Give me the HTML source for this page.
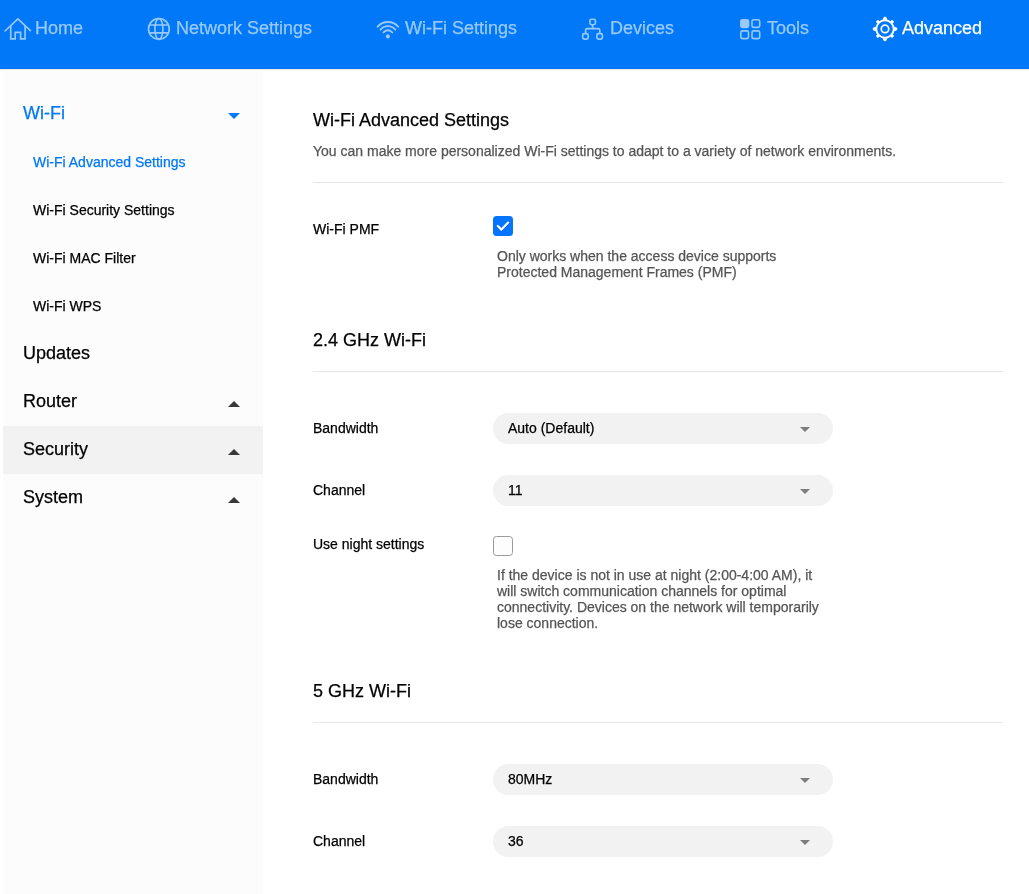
<!DOCTYPE html>
<html lang="en">
<head>
<meta charset="utf-8">
<title>Wi-Fi Advanced Settings</title>
<style>
*{box-sizing:border-box;margin:0;padding:0}
html,body{width:1029px;height:894px;overflow:hidden;background:#fff}
body{font-family:"Liberation Sans",Arial,Helvetica,sans-serif;color:#000;position:relative;-webkit-font-smoothing:antialiased;-webkit-text-stroke:0.25px}
#wrap{position:absolute;left:0;top:0;width:1029px;height:894px;will-change:transform}
/* nav */
#nav{position:absolute;left:0;top:0;width:1029px;height:69px;background:#0078f8;box-shadow:0 1px 1px rgba(120,90,40,.14);z-index:2}
#nav .it{position:absolute;top:0;height:56px;font-size:18px;line-height:56px;color:#99c9fc;white-space:nowrap}
#nav .it.on{color:#fff}
#nav svg{position:absolute;fill:none;stroke:currentColor;overflow:visible}
/* sidebar */
#side{position:absolute;left:3px;top:71px;width:260px;height:823px;background:#fcfcfc}
#side .m{position:absolute;left:0;width:260px;height:48px;font-size:18px;line-height:48px;padding-left:20px;color:#000}
#side .m.on{color:#0078f8}
#side .s{position:absolute;left:0;width:260px;height:48px;font-size:14px;line-height:48px;padding-left:30px;color:#000}
#side .s.on{color:#0078f8}
.tri{position:absolute;right:23px;width:0;height:0;border-left:6px solid transparent;border-right:6px solid transparent}
.tri.up{border-bottom:6px solid #383838}
.tri.dn{border-top:6px solid #0078f8}
/* main */
.h{position:absolute;left:313px;font-size:18px;line-height:22px;color:#000;white-space:nowrap}
.hr{position:absolute;left:313px;width:690px;height:1px;background:#e6e6e6}
.lb{position:absolute;left:313px;font-size:14px;line-height:18px;color:#000;white-space:nowrap}
.help{position:absolute;left:497px;font-size:14px;line-height:16px;color:#555}
.sel{position:absolute;left:493px;width:340px;height:31px;border-radius:16px;background:#f2f2f2;font-size:14px;line-height:31px;padding-left:15px;color:#000}
.sel i{position:absolute;right:23px;top:14px;width:0;height:0;border-left:5px solid transparent;border-right:5px solid transparent;border-top:5px solid #7d7d7d}
.cb{position:absolute;left:493px;width:20px;height:20px;border-radius:3.5px}
.cb.off{border:1px solid #9a9a9a;background:#fdfdfd}
.cb.on{background:#0575ff}
</style>
</head>
<body>
<div id="wrap">
<div id="nav">
<svg id="ico" width="1029" height="68" viewBox="0 0 1029 68" style="left:0;top:0;color:#99c9fc">
<g stroke-width="1.65" stroke-linecap="round" stroke-linejoin="round"><path d="M5 31 L17.9 18.8 L30.4 30.7"/><path d="M10.7 26 V38.9 H15.2 V32.4 H20.6 V38.9 H25.1 V26" stroke-linecap="butt" stroke-linejoin="miter"/></g>
<g stroke-width="1.65"><circle cx="158.9" cy="28.9" r="10.4"/><ellipse cx="158.9" cy="28.9" rx="4" ry="10.4"/><path d="M149.4 25 H168.4 M149.4 32.8 H168.4"/></g>
<g stroke-width="1.9" stroke-linecap="round"><path d="M377.64 26.68 A13.6 13.6 0 0 1 398.16 26.68"/><path d="M380.52 29.62 A9.5 9.5 0 0 1 395.28 29.62"/><path d="M383.48 32.50 A5.4 5.4 0 0 1 392.32 32.50"/></g><circle cx="387.9" cy="36.4" r="2.05" fill="currentColor" stroke="none"/>
<g stroke-width="1.65"><rect x="589.9" y="19.2" width="5.5" height="5.5" rx="1.6"/><rect x="582.7" y="33.6" width="5.5" height="5.5" rx="1.6"/><rect x="596.9" y="33.6" width="5.5" height="5.5" rx="1.6"/><path d="M592.65 24.7 V28.6 M585.6 33.6 V30.2 A1.6 1.6 0 0 1 587.2 28.6 H598.2 A1.6 1.6 0 0 1 599.8 30.2 V33.6"/></g>
<g stroke-width="1.6"><rect x="740.8" y="19.7" width="7.7" height="7.7" rx="1.6" fill="currentColor"/><rect x="752" y="19.7" width="7.7" height="7.7" rx="1.6"/><rect x="740.8" y="30.9" width="7.7" height="7.7" rx="1.6"/><rect x="752" y="30.9" width="7.7" height="7.7" rx="1.6"/></g>
<g color="#fff"><circle cx="885" cy="28.95" r="8.7" stroke-width="1.85"/><circle cx="885" cy="28.95" r="3.75" stroke-width="1.7"/><g fill="#fff" stroke="#fff" stroke-width="0.7" stroke-linejoin="round"><polygon points="882.95,19.75 884.05,17.15 885.95,17.15 887.05,19.75"/><circle cx="892.11" cy="21.84" r="1.35"/><polygon points="894.20,26.90 896.80,28.00 896.80,29.90 894.20,31.00"/><circle cx="892.11" cy="36.06" r="1.35"/><polygon points="887.05,38.15 885.95,40.75 884.05,40.75 882.95,38.15"/><circle cx="877.89" cy="36.06" r="1.35"/><polygon points="875.80,31.00 873.20,29.90 873.20,28.00 875.80,26.90"/><circle cx="877.89" cy="21.84" r="1.35"/></g></g>
</svg>
  <div class="it" style="left:35px">Home</div>
  <div class="it" style="left:176px">Network Settings</div>
  <div class="it" style="left:405px">Wi-Fi Settings</div>
  <div class="it" style="left:610px">Devices</div>
  <div class="it" style="left:767px">Tools</div>
  <div class="it on" style="left:902px">Advanced</div>
</div>

<div id="side">
  <div class="m on" style="top:18px">Wi-Fi<span class="tri dn" style="top:24px"></span></div>
  <div class="s on" style="top:67px">Wi-Fi Advanced Settings</div>
  <div class="s" style="top:115px">Wi-Fi Security Settings</div>
  <div class="s" style="top:163px">Wi-Fi MAC Filter</div>
  <div class="s" style="top:211px">Wi-Fi WPS</div>
  <div class="m" style="top:258px">Updates</div>
  <div class="m" style="top:306px">Router<span class="tri up" style="top:24px"></span></div>
  <div style="position:absolute;left:0;top:355px;width:260px;height:48px;background:#f2f2f2"></div>
  <div class="m" style="top:354px">Security<span class="tri up" style="top:24px"></span></div>
  <div class="m" style="top:402px">System<span class="tri up" style="top:24px"></span></div>
</div>

<div class="h" style="top:109px">Wi-Fi Advanced Settings</div>
<div class="lb" style="top:142px;color:#555">You can make more personalized Wi-Fi settings to adapt to a variety of network environments.</div>
<div class="hr" style="top:182px"></div>

<div class="lb" style="top:220px">Wi-Fi PMF</div>
<div class="cb on" style="top:216px"><svg width="20" height="20" viewBox="0 0 20 20"><path d="M4.8 10.6 L8.4 14.2 L15.2 7.2" fill="none" stroke="#0050d8" stroke-opacity=".55" stroke-width="2.4" stroke-linecap="round" stroke-linejoin="round"/><path d="M4.8 10 L8.4 13.6 L15.2 6.6" fill="none" stroke="#fff" stroke-width="2.2" stroke-linecap="round" stroke-linejoin="round"/></svg></div>
<div class="help" style="top:248px">Only works when the access device supports<br>Protected Management Frames (PMF)</div>

<div class="h" style="top:329px">2.4 GHz Wi-Fi</div>
<div class="hr" style="top:371px"></div>

<div class="lb" style="top:419px">Bandwidth</div>
<div class="sel" style="top:413px">Auto (Default)<i></i></div>
<div class="lb" style="top:481px">Channel</div>
<div class="sel" style="top:475px">11<i></i></div>
<div class="lb" style="top:535px">Use night settings</div>
<div class="cb off" style="top:536px"></div>
<div class="help" style="top:567px">If the device is not in use at night (2:00-4:00 AM), it<br>will switch communication channels for optimal<br>connectivity. Devices on the network will temporarily<br>lose connection.</div>

<div class="h" style="top:680px">5 GHz Wi-Fi</div>
<div class="hr" style="top:722px"></div>

<div class="lb" style="top:770px">Bandwidth</div>
<div class="sel" style="top:764px">80MHz<i></i></div>
<div class="lb" style="top:832px">Channel</div>
<div class="sel" style="top:826px">36<i></i></div>
</div>
</body>
</html>
